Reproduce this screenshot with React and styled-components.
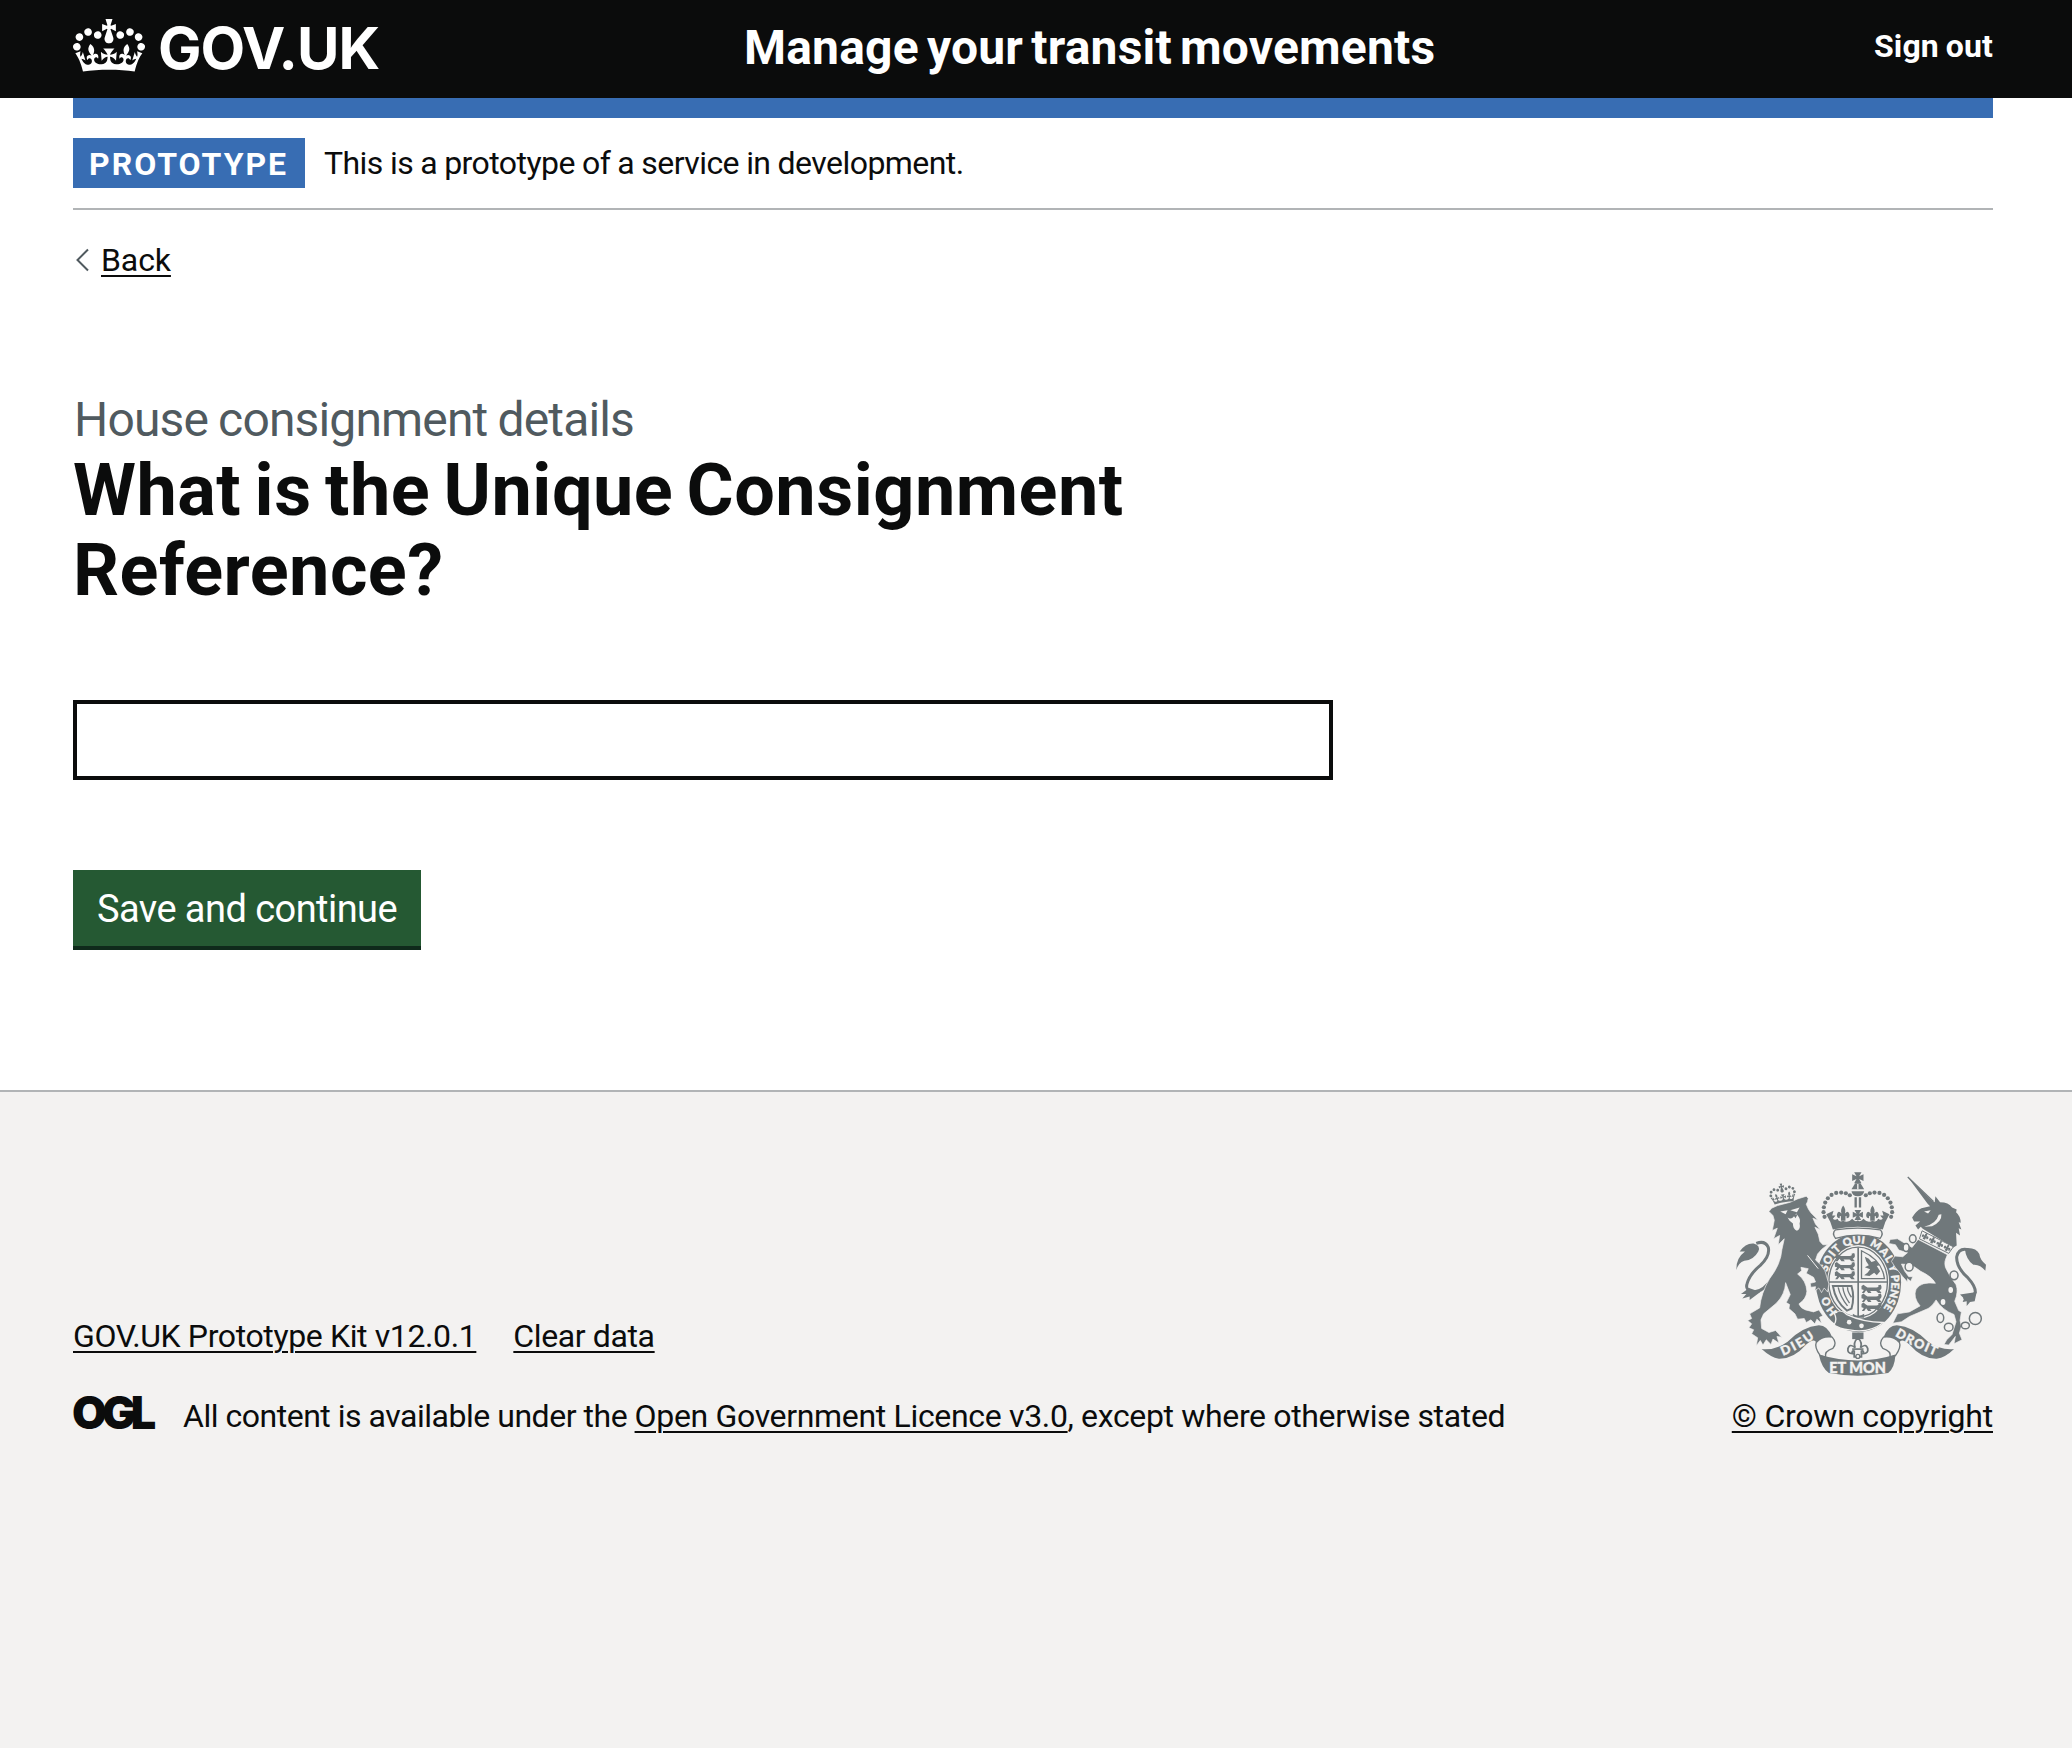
import React from "react";
import styled, { createGlobalStyle } from "styled-components";

const ink = "#0b0c0c";
const blue = "#386db3";
const rule = "#b1b4b6";
const paper = "#f3f2f1";
const crestGrey = "#70787b";

const GlobalStyle = createGlobalStyle`
  *, *::before, *::after { box-sizing: border-box; }
  body {
    margin: 0;
    background: ${paper};
    color: ${ink};
    font-family: Roboto, "Liberation Sans", Arial, sans-serif;
    font-size: 32px;
    line-height: 40px;
  }
`;

const Page = styled.div`
  display: flex;
  flex-direction: column;
  min-height: 1748px;
`;

const Container = styled.div`
  padding: 0 79px 0 73px;
`;

/* Text run with its own tracking and word gap, in px */
const Run = styled.span`
  letter-spacing: ${(p) => p.$track || 0}px;
  word-spacing: ${(p) => p.$gap || 0}px;
  white-space: pre;
`;

const Link = styled.a`
  color: ${ink};
  letter-spacing: ${(p) => p.$track || 0}px;
  word-spacing: ${(p) => p.$gap || 0}px;
  text-decoration: underline;
  text-decoration-thickness: 2px;
  text-underline-offset: 4px;
  white-space: pre;
`;

const Header = styled.header`
  height: 98px;
  background: ${ink};
  color: #fff;
`;

const HeaderRow = styled(Container)`
  display: flex;
  align-items: flex-start;
  padding-top: 18px;
`;

const LogoLink = styled.a`
  display: flex;
  flex: 0 0 670px;
  gap: 13px;
  color: #fff;
`;

const CrownIcon = styled.svg`
  width: 72px;
  height: 53px;
  margin-top: 1px;
  fill: currentColor;
`;

const LogoText = styled.span`
  font: 700 58px/60px Inter, sans-serif;
  letter-spacing: -1px;
`;

const ServiceName = styled.a`
  flex: 1;
  padding-left: 1px;
  color: #fff;
  font-size: 48px;
  font-weight: 700;
  line-height: 60px;
  letter-spacing: 0.2px;
  word-spacing: -4px;
`;

const SignOut = styled.a`
  margin-top: 8px;
  color: #fff;
  font-weight: 700;
  word-spacing: -1px;
  letter-spacing: 0.1px;
`;

const BlueBar = styled.div`
  height: 20px;
  background: ${blue};
`;

const Main = styled.div`
  background: #fff;
  padding-bottom: 140px;
`;

const PhaseBanner = styled.div`
  display: flex;
  align-items: center;
  gap: 19px;
  padding: 20px 0;
  border-bottom: 2px solid ${rule};
`;

const Tag = styled.strong`
  width: 232px;
  height: 50px;
  padding: 1px 0 0 16px;
  background: ${blue};
  color: #fff;
  line-height: 50px;
  letter-spacing: 2px;
`;

const BackLink = styled.div`
  display: flex;
  align-items: center;
  gap: 12px;
  margin-top: 30px;
`;

const Chevron = styled.svg`
  width: 13px;
  height: 24px;
  margin-left: 3px;
  fill: none;
  stroke: #505a5f;
  stroke-width: 2;
`;

const Form = styled.form`
  width: 1260px;
  margin-top: 110px;
`;

const Caption = styled.span`
  display: block;
  padding-left: 1px;
  color: #505a5f;
  font-size: 48px;
  line-height: 60px;
  letter-spacing: -0.85px;
  word-spacing: -1px;
`;

const Heading = styled.h1`
  display: flex;
  flex-direction: column;
  margin: 0 0 89px;
  padding-top: 1px;
  font-size: 72px;
  font-weight: 700;
  line-height: 80px;
`;

const TextInput = styled.input`
  display: block;
  width: 100%;
  height: 80px;
  margin-bottom: 90px;
  border: 4px solid ${ink};
  border-radius: 0;
  background: #fff;
`;

const Button = styled.button`
  display: block;
  width: 348px;
  height: 80px;
  padding: 2px 0 0;
  border: 0;
  border-bottom: 4px solid #0f2a1b;
  background: #255933;
  color: #fff;
  font: 400 38px/74px Roboto, sans-serif;
  letter-spacing: -0.55px;
`;

const Footer = styled.footer`
  flex: 1;
  padding-top: 80px;
  border-top: 2px solid ${rule};
  background: ${paper};
`;

const FooterRow = styled(Container)`
  display: flex;
  align-items: flex-end;
  justify-content: space-between;
`;

const FooterLinks = styled.div`
  display: flex;
  gap: 37px;
  margin-bottom: 40px;
`;

const Licence = styled.div`
  display: flex;
`;

const OglLogo = styled.span`
  flex: 0 0 110px;
  height: 40px;
  font: 900 45px/34px Inter, sans-serif;
  letter-spacing: -5px;
  text-indent: -1px;
`;

const Copyright = styled.div`
  display: flex;
  flex-direction: column;
  align-items: center;
  gap: 20px;
`;

const CrestSvg = styled.svg`
  width: 250px;
  height: 204px;
  margin-right: 2px;
  fill: ${crestGrey};
  stroke: none;
  overflow: visible;
`;

const MottoText = styled.text`
  fill: ${paper};
  stroke: ${paper};
  stroke-width: 1.2px;
  font-family: Lato, sans-serif;
  font-size: ${(p) => p.$size}px;
  font-weight: 900;
`;

const crownPath =
  "M25 30.2c3.5 1.5 7.7-.2 9.1-3.7 1.5-3.6-.2-7.8-3.9-9.2-3.6-1.4-7.6.3-9.1 3.9-1.4 3.5.3 7.5 3.9 9zM9 39.5c3.6 1.5 7.8-.2 9.2-3.7 1.5-3.6-.2-7.8-3.9-9.1-3.6-1.5-7.6.2-9.1 3.8-1.4 3.5.3 7.5 3.8 9zM4.4 57.2c3.5 1.5 7.7-.2 9.1-3.8 1.5-3.6-.2-7.7-3.9-9.1-3.5-1.5-7.6.3-9.1 3.8-1.4 3.5.3 7.6 3.9 9.1zm38.3-21.4c3.5 1.5 7.7-.2 9.1-3.8 1.5-3.6-.2-7.7-3.9-9.1-3.6-1.5-7.6.3-9.1 3.8-1.3 3.6.4 7.7 3.9 9.1zm64.4-5.6c-3.6 1.5-7.8-.2-9.1-3.7-1.5-3.6.2-7.8 3.8-9.2 3.6-1.4 7.7.3 9.2 3.9 1.3 3.5-.4 7.5-3.9 9zm15.9 9.3c-3.6 1.5-7.7-.2-9.1-3.7-1.5-3.6.2-7.8 3.7-9.1 3.6-1.5 7.7.2 9.2 3.8 1.5 3.5-.3 7.5-3.8 9zm4.7 17.7c-3.6 1.5-7.8-.2-9.2-3.8-1.5-3.6.2-7.7 3.9-9.1 3.6-1.5 7.7.3 9.2 3.8 1.3 3.5-.4 7.6-3.9 9.1zM89.3 35.8c-3.6 1.5-7.8-.2-9.2-3.8-1.4-3.6.2-7.7 3.9-9.1 3.6-1.5 7.7.3 9.2 3.8 1.4 3.6-.3 7.7-3.9 9.1zM69.7 17.7l8.9 4.7V9.3l-8.9 2.8c-.2-.3-.5-.6-.9-.9L72.4 0H59.6l3.5 11.2c-.3.3-.6.5-.9.9l-8.8-2.8v13.1l8.8-4.7c.3.3.6.7.9.9l-5 15.4v.1c-.2.8-.4 1.6-.4 2.4 0 4.1 3.1 7.5 7 8.1h.2c.3 0 .7.1 1 .1.4 0 .7 0 1-.1h.2c4-.6 7.1-4.1 7.1-8.1 0-.8-.1-1.7-.4-2.4V34l-5.1-15.4c.4-.2.7-.6 1-.9zM66 92.8c16.9 0 32.8 1.1 47.1 3.2 4-16.9 8.9-26.7 14-33.5l-9.6-3.4c1 4.9 1.1 7.2 0 10.2-1.5-1.4-3-4.3-4.2-8.7L108.6 76c2.8-2 5-3.2 7.5-3.3-4.4 9.4-10 11.9-13.6 11.2-4.3-.8-6.3-4.6-5.6-7.9 1-4.7 5.7-5.9 8-.5 4.3-8.7-3-11.4-7.6-8.8 7.1-7.2 7.9-13.5 2.1-21.1-8 6.1-8.1 12.3-4.5 20.8-4.7-5.4-12.1-2.5-9.5 6.2 3.4-5.2 7.9-2 7.2 3.1-.6 4.3-6.4 7.8-13.5 7.2-10.3-.9-10.9-8-11.2-13.8 2.5-.5 7.1 1.8 11 7.3L80.2 60c-4.1 4.4-8 5.3-12.3 5.4 1.4-4.4 8-11.6 8-11.6H55.5s6.4 7.2 7.9 11.6c-4.2-.1-8-1-12.3-5.4l1.4 16.4c3.9-5.5 8.5-7.7 10.9-7.3-.3 5.8-.9 12.8-11.1 13.8-7.2.6-12.9-2.9-13.5-7.2-.7-5 3.8-8.3 7.1-3.1 2.7-8.7-4.6-11.6-9.4-6.2 3.7-8.5 3.6-14.7-4.6-20.8-5.8 7.6-5 13.9 2.2 21.1-4.7-2.6-11.9.1-7.7 8.8 2.3-5.5 7.1-4.2 8.1.5.7 3.3-1.3 7.1-5.7 7.9-3.5.7-9-1.8-13.5-11.2 2.5.1 4.7 1.3 7.5 3.3l-4.7-15.4c-1.2 4.4-2.7 7.2-4.3 8.7-1.1-3-.9-5.3 0-10.2l-9.5 3.4c5 6.9 9.9 16.7 14 33.5 14.8-2.1 30.8-3.2 47.7-3.2z";

const lionPath =
  "M150 154L158 144L176 136L214 126L236 116L262 108L268 114L266 124L262 132Q268 148 276 158L298 180L282 174L290 192L304 208L288 201L298 222L303 244L312 254L326 254L308 268L296 282L290 300Q306 312 318 332L330 372L326 396L316 384L308 398L300 384L288 392L290 380L276 382L274 370L290 366L284 352L262 340L268 326L246 322L248 332L236 342Q262 362 264 394Q262 418 240 432Q246 446 260 450L284 456L300 450L312 468L302 472L308 490L294 478L288 492L276 480L262 488L256 476L236 478L228 462L210 446L212 434L202 428L214 404L200 368Q198 404 172 430L134 462L126 480L128 506L150 518L170 512L188 532L174 530L180 550L162 538L156 554L142 540L132 556L124 542L112 558L116 534L98 522L104 510L90 504L98 492L86 482L98 476L92 462L122 444Q126 400 152 356Q186 312 189 268L196 236L178 254L182 226L164 236L175 204L160 211L166 180L162 166Z";

const unicornBody =
  "M598 238L686 284Q674 306 680 322Q694 352 712 374Q720 396 708 424L720 452L728 456L724 482L728 500L722 520L730 540L706 552L710 530L690 556L676 554L684 540L700 524L712 486L706 464Q670 450 652 420Q640 440 628 446L572 470L548 486L522 490L536 462L572 456L604 438Q582 412 592 388Q606 364 650 370Q640 350 606 334Q586 318 572 314L548 312L558 334L570 350L582 350L576 364L566 356L566 366L552 350L528 320L518 304L528 288L552 290L566 278L540 270L530 254L510 250L514 238L536 236L562 252L580 262Z";

const unicornHead =
  "M567 50L638 120L648 126L650 108L664 126Q690 126 700 142L714 148L712 156Q726 168 726 188L720 186L728 208L720 204L724 226L712 218L714 256L704 262L612 206L606 200L598 208L590 196L604 184L586 184L580 172Q592 152 608 144L634 138L626 130Z";

function CrownMark() {
  return (
    <CrownIcon viewBox="0 0 132 97" aria-hidden="true">
      <path d={crownPath} />
    </CrownIcon>
  );
}

const lily = "M0-24Q11-12 6 0Q18-12 22 2Q24 14 12 14Q14 6 8 8L8 22H-8V8Q-14 6-12 14Q-24 14-22 2Q-18-12-6 0Q-11-12 0-24Z";
const pattee = "M-11-16H11L4-4L17-10V10L4 4L11 17H-11L-4 4L-17 10V-10L-4-4Z";
const passant =
  "M0 4L6 0L12 5L18 9H44Q54 8 50 2L58 0Q64 12 54 17L60 25H50L44 19H26L30 25H20L14 17L8 25H1L7 16L0 14Z";

const Lions = ({ x, y }) => (
  <g transform={`translate(${x} ${y})`}>
    <path d={passant} />
    <path d={passant} transform="translate(0 27)" />
    <path d={passant} transform="translate(0 54)" />
  </g>
);

function CrownOfState() {
  const half = [
    [317, 170], [314, 156], [315, 141], [319, 127], [327, 114],
    [338, 104], [352, 98], [367, 97], [381, 99], [393, 105],
  ];
  return (
    <g>
      {half.map(([x, y]) => (
        <g key={x + "-" + y}>
          <circle cx={x} cy={y} r="6.3" />
          <circle cx={834 - x} cy={y} r="6.3" />
        </g>
      ))}
      <path d={pattee} transform="translate(417 52)" />
      <path d="M409 69H425L436 87H398Z" />
      <path d="M417 71V87" stroke={paper} strokeWidth="4" />
      <path d="M398 93H436Q434 108 417 108Q400 108 398 93Z" />
      <path d="M407 111H414V142H407ZM420 111H427V142H420Z" />
      <path d={lily} transform="translate(373 160) scale(.85 1)" />
      <path d={lily} transform="translate(461 160) scale(.85 1)" />
      <path d={pattee} transform="translate(417 164) scale(.9)" />
      <path d="M322 162L344 152L340 166L350 166L342 176Q348 182 356 176Q360 188 373 182Q388 190 400 176Q410 188 417 180Q424 188 434 176Q446 190 461 182Q474 188 478 176Q486 182 492 176L484 166L494 166L490 152L512 162Q498 184 492 208Q417 192 342 208Q336 184 322 162Z" />
      <path d="M350 209Q417 199 484 209Q496 219 484 235Q417 215 350 235Q338 219 350 209Z" fill={paper} stroke={crestGrey} strokeWidth="4" />
    </g>
  );
}

const garterWords = [
  ["HO", 72, 56],
  ["SOIT", 200, 82],
  ["QUI", 293, 62],
  ["MAL", 370, 78],
  ["Y", 456, 22],
  ["PENSE", 486, 104],
];

function RoyalArms() {
  return (
    <g>
      <ellipse cx="419" cy="368" rx="128" ry="149" />
      <ellipse cx="418" cy="366" rx="93" ry="111" fill={paper} />
      <ellipse cx="418" cy="366" rx="88" ry="105" fill="none" stroke={crestGrey} strokeWidth="4" />
      <path d="M418 262V470M330 366H506" stroke={crestGrey} strokeWidth="5" />
      <Lions x={348} y={279} />
      <Lions x={428} y={374} />
      <path d="M428 272V356H497Q490 300 428 272Z" fill="none" stroke={crestGrey} strokeWidth="4" />
      <path d="M438 290L450 296L458 306L470 302L482 316L474 318L484 334L474 346L466 338L452 348L436 346L446 338L454 328L438 322L450 316L442 304Z" />
      <path d="M342 378H398Q408 412 398 446L384 452Q350 426 342 378Z" fill="none" stroke={crestGrey} strokeWidth="6" />
      <path d="M358 382Q364 410 386 438M372 382Q374 404 392 430M386 382Q386 396 398 412" fill="none" stroke={crestGrey} strokeWidth="4" />
      <path d="M402 462Q418 474 436 462V474H402Z" />
      <path id="garter" d="M420 484A98 117 0 0 1 420 250A98 117 0 0 1 420 484" fill="none" />
      {garterWords.map(([word, offset, length]) => (
        <MottoText key={word} $size={33}>
          <textPath href="#garter" startOffset={offset} textLength={length}>{word}</textPath>
        </MottoText>
      ))}
      <path d="M346 460Q368 448 384 464Q430 486 494 488Q450 522 392 510Q360 508 346 494Q356 478 346 460Z" stroke={paper} strokeWidth="4" />
      <path d="M356 458Q376 454 380 474Q376 496 350 494" fill="none" stroke={crestGrey} strokeWidth="5" />
      <circle cx="391" cy="487" r="7" fill={paper} />
      <circle cx="428" cy="498" r="7" fill={paper} />
    </g>
  );
}

function Lion() {
  return (
    <g>
      <path d="M164 350Q134 396 104 396Q78 392 84 372Q92 342 124 316Q154 288 148 262Q138 240 112 250" fill="none" stroke={crestGrey} strokeWidth="9" />
      <path d="M52 330Q50 294 78 274L62 274Q80 248 104 250Q126 256 118 274Q104 300 76 302Q58 308 52 330Z" />
      <path d="M90 384L66 402L82 402L70 416L92 410L92 420L124 396Z" />
      <path d={lionPath} stroke={paper} strokeWidth="2" />
      <path d="M184 154L206 150L200 162ZM214 150L242 142L234 156Z" fill={paper} />
      <path d="M206 172Q214 178 222 172L232 160L238 168Q246 178 242 190Q246 208 234 212Q222 208 222 190L212 182Z" fill={paper} />
      <path d="M222 164L236 162L230 174Z" />
      <path d="M266 286L298 326" stroke={paper} strokeWidth="3" />
      <path d={crownPath} transform="translate(146 77) rotate(-10) scale(.61)" />
    </g>
  );
}

function Unicorn() {
  const links = [
    [582, 236, 10, 12], [562, 262, 9, 12], [571, 320, 12, 13], [706, 346, 12, 13],
    [665, 474, 10, 14], [690, 502, 13, 12], [740, 497, 12, 10], [770, 476, 18, 18],
  ];
  return (
    <g>
      <path d="M734 412Q764 418 770 396Q770 378 748 354Q712 322 714 290Q720 264 744 268" fill="none" stroke={crestGrey} strokeWidth="9" />
      <path d="M738 264Q772 260 782 282Q784 300 802 314L800 332Q784 312 764 314Q742 300 738 264Z" />
      <path d="M724 404L736 416L732 426L744 424L744 438L754 426L768 424L774 396Z" />
      <path d={unicornBody} stroke={paper} strokeWidth="2" />
      <path d={unicornHead} />
      <path d="M567 50L644 124" stroke={crestGrey} strokeWidth="4" />
      <path d="M616 154L636 150L628 160ZM668 162Q670 184 640 198L616 200Q652 192 660 164Z" fill={paper} />
      <path d="M610 212L704 260L690 280L602 236Z" fill={paper} stroke={crestGrey} strokeWidth="3" />
      {[0, 1, 2, 3].map((n) => (
        <path key={n} d={lily} transform={`translate(${620 + n * 22} ${228 + n * 11.5}) rotate(27) scale(.48)`} />
      ))}
      {links.map(([x, y, rx, ry]) => (
        <ellipse key={x} cx={x} cy={y} rx={rx} ry={ry} fill={paper} stroke={crestGrey} strokeWidth="4.5" />
      ))}
      <ellipse cx="696" cy="390" rx="7" ry="9" fill={paper} />
      <ellipse cx="673" cy="426" rx="7" ry="9" fill={paper} />
    </g>
  );
}

function MottoScroll() {
  return (
    <g>
      <path d="M128 568Q170 572 206 546Q250 500 300 496Q326 496 340 532Q314 528 292 548Q286 534 262 554Q224 598 180 597Q156 594 128 568Z" />
      <path d="M706 568Q664 572 628 546Q584 500 534 496Q508 496 494 532Q520 528 542 548Q548 534 572 554Q610 598 654 597Q680 594 706 568Z" />
      <path d="M340 532Q356 550 342 566Q316 574 320 592L304 588Q286 562 292 548Q310 528 340 532Z" fill={paper} stroke={crestGrey} strokeWidth="4" />
      <path d="M494 532Q478 550 492 566Q518 574 514 592L530 588Q548 562 542 548Q524 528 494 532Z" fill={paper} stroke={crestGrey} strokeWidth="4" />
      <path d="M300 584Q360 602 417 602Q474 602 530 584Q528 624 508 640Q460 648 417 648Q374 648 330 640Q308 624 300 584Z" />
      <MottoText $size={46} x="331" y="640" textLength="170" lengthAdjust="spacingAndGlyphs">ET MON</MottoText>
      <path id="dieu" d="M192 588Q244 568 298 526" fill="none" />
      <path id="droit" d="M528 528Q580 560 654 589" fill="none" />
      <MottoText $size={38}>
        <textPath href="#dieu" textLength="110">DIEU</textPath>
      </MottoText>
      <MottoText $size={38}>
        <textPath href="#droit" textLength="136">DROIT</textPath>
      </MottoText>
      <path d="M400 518H434V538H400Z" />
      <path d={lily} transform="translate(417 564) scale(1.35 1.25)" fill={paper} stroke={crestGrey} strokeWidth="4" />
      <path d="M400 568H434" stroke={crestGrey} strokeWidth="5" />
      <circle cx="417" cy="590" r="6" fill={paper} stroke={crestGrey} strokeWidth="4" />
    </g>
  );
}

function RoyalCrest() {
  return (
    <CrestSvg viewBox="51 35 751 614" preserveAspectRatio="none" aria-hidden="true">
      <RoyalArms />
      <CrownOfState />
      <Lion />
      <Unicorn />
      <MottoScroll />
    </CrestSvg>
  );
}

export default function App() {
  return (
    <Page>
      <GlobalStyle />
      <Header>
        <HeaderRow>
          <LogoLink>
            <CrownMark />
            <LogoText>GOV.UK</LogoText>
          </LogoLink>
          <ServiceName>Manage your transit movements</ServiceName>
          <SignOut>Sign out</SignOut>
        </HeaderRow>
      </Header>
      <Main>
        <Container>
          <BlueBar />
          <PhaseBanner>
            <Tag>PROTOTYPE</Tag>
            <Run $track={-0.55} $gap={-0.3}>This is a prototype of a service in development.</Run>
          </PhaseBanner>
          <BackLink>
            <Chevron viewBox="0 0 13 24" aria-hidden="true">
              <path d="M12 1.5L1.5 12L12 22.5" />
            </Chevron>
            <Link $track={-0.1}>Back</Link>
          </BackLink>
          <Form>
            <Caption>House consignment details</Caption>
            <Heading>
              <Run $track={0.5} $gap={-5}>What is the Unique Consignment</Run>
              <Run $track={0.45}>Reference?</Run>
            </Heading>
            <TextInput type="text" aria-label="Unique Consignment Reference" />
            <Button type="button">Save and continue</Button>
          </Form>
        </Container>
      </Main>
      <Footer>
        <FooterRow>
          <div>
            <FooterLinks>
              <Link $track={-0.38}>GOV.UK Prototype Kit v12.0.1</Link>
              <Link $track={-0.38}>Clear data</Link>
            </FooterLinks>
            <Licence>
              <OglLogo>OGL</OglLogo>
              <div>
                <Run $track={-0.48}>{"All content is available under the "}</Run>
                <Link $track={-0.33}>Open Government Licence v3.0</Link>
                <Run $track={-0.35}>, except where otherwise stated</Run>
              </div>
            </Licence>
          </div>
          <Copyright>
            <RoyalCrest />
            <Link $track={-0.22}>© Crown copyright</Link>
          </Copyright>
        </FooterRow>
      </Footer>
    </Page>
  );
}
